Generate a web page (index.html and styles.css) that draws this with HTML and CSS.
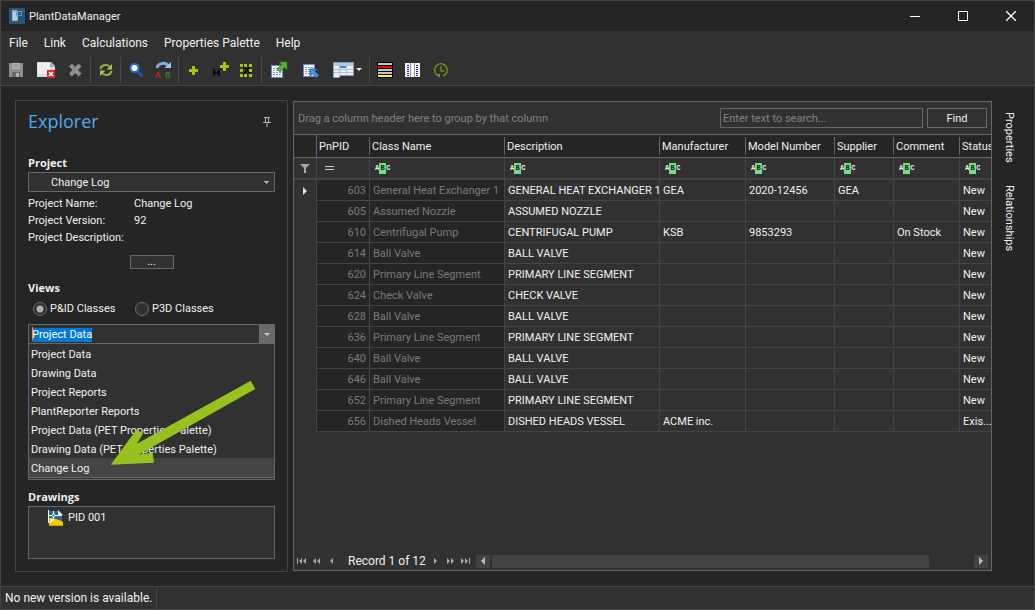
FILE: index.html
```html
<!DOCTYPE html>
<html lang="en">
<head>
<meta charset="utf-8">
<title>PlantDataManager</title>
<link rel="stylesheet" href="styles.css">
</head>
<body>
<div class="window">
  <header class="titlebar">
    <svg class="app-icon" width="16" height="16" viewBox="0 0 16 16"><rect width="16" height="16" rx="1" fill="#24587c"/><path d="M3 2h5v2h1v9H3z" fill="#8fb0c2"/><path d="M4 4h4v8H4z" fill="#b9ced9"/><path d="M7.500 8.500V3.500h5v4h-3" fill="none" stroke="#6c9ab8"/></svg>
    <h1 class="app-name">PlantDataManager</h1>
    <div class="window-controls">
      <button class="win-btn" aria-label="Minimize"><svg width="10" height="10"><path d="M0 5.500h10" stroke="#fff"/></svg></button>
      <button class="win-btn" aria-label="Maximize"><svg width="10" height="10"><path d="M.5.5h9v9h-9z" fill="none" stroke="#fff"/></svg></button>
      <button class="win-btn" aria-label="Close"><svg width="10" height="10"><path d="M0 0l10 10M10 0L0 10" stroke="#fff" stroke-width="1.300"/></svg></button>
    </div>
  </header>

  <nav class="menubar">
    <button class="menu">File</button>
    <button class="menu">Link</button>
    <button class="menu">Calculations</button>
    <button class="menu">Properties Palette</button>
    <button class="menu">Help</button>
  </nav>

  <div class="toolbar" role="toolbar" aria-label="Main">
    <div class="tool-group">
      <button class="tool" aria-label="Save"><svg width="16" height="16"><path d="M1 1h14v14H1z" fill="#8d8d8d"/><path d="M4 1h8v6H4z" fill="#b5b5b5"/><path d="M5 3h6M5 5h6" stroke="#8a8a8a"/><path d="M4 10h8v5H4z" fill="#6b6b6b"/><path d="M8 11h3v4H8z" fill="#b0b0b0"/></svg></button>
      <button class="tool tool-wide" aria-label="Remove sheet"><svg width="18" height="18"><path d="M0 1h14l4 4v11H0z" fill="#dcdcdc"/><path d="M1 2h12v11H1z" fill="#f0eef0"/><path d="M13 1v5h5z" fill="#aaa"/><path d="M10 9h8v8h-8z" fill="#d8262e"/><path d="M12 11l4 4M16 11l-4 4" stroke="#fff" stroke-width="1.500"/></svg></button>
      <button class="tool" aria-label="Delete"><svg width="16" height="16"><path d="M2.500 3l9.500 10M12 3L2.500 13" stroke="#8f8f8f" stroke-width="4"/></svg></button>
    </div>
    <div class="tool-group">
      <button class="tool" aria-label="Refresh"><svg width="16" height="16"><path d="M2.500 7C3 3.500 8 1.500 11.500 4.500M13.500 9C13 12.500 8 14.500 4.500 11.500" fill="none" stroke="#8db43b" stroke-width="2.200"/><path d="M14 2v5.500H8.500zM2 14V8.500h5.500z" fill="#a4c94f"/></svg></button>
    </div>
    <div class="tool-group">
      <button class="tool" aria-label="Search"><svg width="16" height="16"><path d="M9 9l5.500 5.500" stroke="#1757b8" stroke-width="3"/><circle cx="6.500" cy="6" r="4" fill="#fff" stroke="#2a6fe0" stroke-width="2"/></svg></button>
      <button class="tool" aria-label="Replace"><svg width="18" height="18" class="replace"><path d="M2 7C3 1.500 11 1 13 5" fill="none" stroke="#79aede" stroke-width="3"/><path d="M9.500 7H16V1z" fill="#9cc6ee"/><text x="0" y="17" fill="#c81c1c">A</text><text x="10" y="17" fill="#3a7a20">B</text></svg></button>
    </div>
    <div class="tool-group tool-group-tight">
      <button class="tool" aria-label="Add"><svg width="16" height="16"><path d="M6 4h3v3h3v3H9v3H6v-3H3V7h3z" fill="#a4c70f"/></svg></button>
      <button class="tool" aria-label="Add symbol"><svg width="18" height="18"><path d="M11 1h3v3h3v3h-3v3h-3V7H8V4h3z" fill="#a4c70f"/><path d="M1 7l7 9V7l-7 9z" fill="#0b0b0b"/></svg></button>
      <button class="tool" aria-label="Select area"><svg width="16" height="16"><path d="M3 3l8 10M11 3L3 13" stroke="#0b0b0b" stroke-width="1.500"/><path d="M0 2h3v3H0zM4 2h3v3H4zM9 2h3v3H9zM0 7h3v3H0zM9 7h3v3H9zM0 12h3v3H0zM4 12h3v3H4zM9 12h3v3H9z" fill="#a4c70f"/></svg></button>
    </div>
    <div class="tool-group">
      <button class="tool tool-wide" aria-label="Export"><svg width="18" height="18"><path d="M1.500 4.500h11v12h-11z" fill="#eef3fb" stroke="#6c8cc0"/><path d="M3 7.500h8M3 9.500h8M3 11.500h8M3 13.500h8" stroke="#7f95bb" stroke-dasharray="2 1"/><path d="M9 1h8v8l-2.500-2.500L10 11 7 8l4.500-4.500z" fill="#57b234" stroke="#2d7a17" stroke-width=".7"/></svg></button>
      <button class="tool tool-wide" aria-label="Import"><svg width="18" height="18"><path d="M1.500 3.500h11v12h-11z" fill="#eef3fb" stroke="#6c8cc0"/><path d="M3 6.500h8M3 8.500h8M3 10.500h8M3 12.500h8" stroke="#7f95bb" stroke-dasharray="2 1"/><path d="M8 8h7l-2 2.500 4 3.500-2.500 3-4-4L8 15z" fill="#4c8fdc" stroke="#1f559f" stroke-width=".7"/></svg></button>
      <button class="tool tool-menu" aria-label="Layout"><svg width="30" height="18"><path d="M.5 1.500h20v13h-14v2h-6z" fill="#e9eef4" stroke="#8ba0b8"/><path d="M1 2h19v3H1z" fill="#b9c8d8"/><path d="M1 8.500h19M1 11.500h19M6.500 2v14M13.500 5v9" stroke="#b4c2d0"/><path d="M7 5h6v2H7z" fill="#2c8fe0"/><path d="M23 7h6l-3 3z" fill="#eee"/></svg></button>
    </div>
    <div class="tool-group">
      <button class="tool" aria-label="Row colors"><svg width="16" height="16"><path d="M0 0h16v16H0z" fill="#000"/><path d="M1 2h14M1 8h14M1 11h14" stroke="#c4c4c4" stroke-width="2"/><path d="M1 5h14" stroke="#f00" stroke-width="2"/><path d="M1 14h14" stroke="#ff0" stroke-width="2"/></svg></button>
      <button class="tool" aria-label="Columns"><svg width="16" height="16"><path d="M0 1h15v14H0z" fill="#f8f8f8"/><path d="M5.500 1v14M9.500 1v14" stroke="#999"/><path d="M3 3v11M12 3v11" stroke="#1414c8" stroke-width="2" stroke-dasharray="1 1"/></svg></button>
      <button class="tool" aria-label="History"><svg width="16" height="16"><path d="M4 13A6.300 6.300 0 1 1 10 14" fill="none" stroke="#70901f" stroke-width="1.500"/><path d="M2 12h5v4z" fill="#70901f"/><path d="M8 4v5h3.500" fill="none" stroke="#70901f" stroke-width="1.300"/></svg></button>
    </div>
  </div>

  <main class="workspace">
    <aside class="explorer">
      <div class="explorer-head">
        <h2 class="explorer-title">Explorer</h2>
        <button class="pin" aria-label="Pin"><svg width="8" height="10"><path d="M1 .5h6M2.500 0v5M5.500 0v5M0 5.500h8M4 5v5" fill="none" stroke="#b5b5b5"/></svg></button>
      </div>

      <label class="section" for="project">Project</label>
      <select class="project" id="project"><option>Change Log</option></select>
      <dl class="details">
        <dt>Project Name:</dt><dd>Change Log</dd>
        <dt>Project Version:</dt><dd>92</dd>
        <dt>Project Description:</dt><dd></dd>
      </dl>
      <button class="more" aria-label="More">...</button>

      <label class="section" for="view">Views</label>
      <div class="radios">
        <label class="radio"><input type="radio" name="cls" checked>P&amp;ID Classes</label>
        <label class="radio"><input type="radio" name="cls">P3D Classes</label>
      </div>
      <div class="combo">
        <input class="combo-input" id="view" type="text" value="Project Data" autofocus>
        <button class="combo-btn" aria-label="Open list"><svg width="6" height="3"><path d="M0 0h6L3 3z" fill="#ccc"/></svg></button>
      </div>
      <ul class="options" role="listbox" aria-label="Views">
        <li class="option" role="option">Project Data</li>
        <li class="option" role="option">Drawing Data</li>
        <li class="option" role="option">Project Reports</li>
        <li class="option" role="option">PlantReporter Reports</li>
        <li class="option" role="option">Project Data (PET Properties Palette)</li>
        <li class="option" role="option">Drawing Data (PET Properties Palette)</li>
        <li class="option option-hover" role="option">Change Log</li>
      </ul>

      <h3 class="section">Drawings</h3>
      <ul class="drawings">
        <li class="drawing"><svg width="16" height="16"><path d="M1 1h9l4 4v10H1z" fill="#2c6698"/><path d="M10 0v5h5z" fill="#e6eef5"/><path d="M.5 0v13M1 5.500h13M5.500 1v8" stroke="#fff"/><circle cx="5.500" cy="5.500" r="1.500" fill="#2c6698" stroke="#fff"/><path d="M1 8q7 0 14 4v4H1z" fill="#f9c900"/><path d="M1 15.500h14" stroke="#d39a12"/><path d="M2 9h5l-5 5z" fill="#fff0a0"/></svg>PID 001</li>
      </ul>
    </aside>

    <section class="grid" aria-label="Records">
      <div class="group-panel">
        <span class="group-hint">Drag a column header here to group by that column</span>
        <input class="search" type="text" placeholder="Enter text to search..." aria-label="Search">
        <button class="find">Find</button>
      </div>
      <div class="table-wrap">
        <table class="records">
          <colgroup><col class="c-mark"><col class="c-id"><col class="c-class"><col class="c-desc"><col class="c-manu"><col class="c-model"><col class="c-supp"><col class="c-comm"><col></colgroup>
          <thead>
            <tr class="heads"><th></th><th>PnPID</th><th>Class Name</th><th>Description</th><th>Manufacturer</th><th>Model Number</th><th>Supplier</th><th>Comment</th><th>Status</th></tr>
            <tr class="filters">
              <td class="mark"><svg width="10" height="9"><path d="M0 0h10L6 4v5H4V4z" fill="#a8a8a8"/></svg></td>
              <td class="equals"><svg width="9" height="4"><path d="M0 .5h9M0 3.500h9" stroke="#ccc"/></svg></td>
              <td><span class="abc">A<b>B</b>C</span></td><td><span class="abc">A<b>B</b>C</span></td><td><span class="abc">A<b>B</b>C</span></td><td><span class="abc">A<b>B</b>C</span></td><td><span class="abc">A<b>B</b>C</span></td><td><span class="abc">A<b>B</b>C</span></td><td><span class="abc">A<b>B</b>C</span></td>
            </tr>
          </thead>
          <tbody>
            <tr><td class="mark"><svg width="4" height="8"><path d="M0 0l4 4-4 4z" fill="#ddd"/></svg></td><td>603</td><td>General Heat Exchanger 1</td><td>GENERAL HEAT EXCHANGER 1</td><td>GEA</td><td>2020-12456</td><td>GEA</td><td></td><td>New</td></tr>
            <tr><td></td><td>605</td><td>Assumed Nozzle</td><td>ASSUMED NOZZLE</td><td></td><td></td><td></td><td></td><td>New</td></tr>
            <tr><td></td><td>610</td><td>Centrifugal Pump</td><td>CENTRIFUGAL PUMP</td><td>KSB</td><td>9853293</td><td></td><td>On Stock</td><td>New</td></tr>
            <tr><td></td><td>614</td><td>Ball Valve</td><td>BALL VALVE</td><td></td><td></td><td></td><td></td><td>New</td></tr>
            <tr><td></td><td>620</td><td>Primary Line Segment</td><td>PRIMARY LINE SEGMENT</td><td></td><td></td><td></td><td></td><td>New</td></tr>
            <tr><td></td><td>624</td><td>Check Valve</td><td>CHECK VALVE</td><td></td><td></td><td></td><td></td><td>New</td></tr>
            <tr><td></td><td>628</td><td>Ball Valve</td><td>BALL VALVE</td><td></td><td></td><td></td><td></td><td>New</td></tr>
            <tr><td></td><td>636</td><td>Primary Line Segment</td><td>PRIMARY LINE SEGMENT</td><td></td><td></td><td></td><td></td><td>New</td></tr>
            <tr><td></td><td>640</td><td>Ball Valve</td><td>BALL VALVE</td><td></td><td></td><td></td><td></td><td>New</td></tr>
            <tr><td></td><td>646</td><td>Ball Valve</td><td>BALL VALVE</td><td></td><td></td><td></td><td></td><td>New</td></tr>
            <tr><td></td><td>652</td><td>Primary Line Segment</td><td>PRIMARY LINE SEGMENT</td><td></td><td></td><td></td><td></td><td>New</td></tr>
            <tr><td></td><td>656</td><td>Dished Heads Vessel</td><td>DISHED HEADS VESSEL</td><td>ACME inc.</td><td></td><td></td><td></td><td>Exis...</td></tr>
          </tbody>
        </table>
      </div>
      <div class="pager">
        <button class="page-btn" aria-label="First"><svg width="10" height="6"><path d="M.5 0v6" stroke="#aaa"/><path d="M5 0v6L2 3zM9 0v6L6 3z" fill="#aaa"/></svg></button>
        <button class="page-btn" aria-label="Previous page"><svg width="8" height="6"><path d="M3 0v6L0 3zM7 0v6L4 3z" fill="#aaa"/></svg></button>
        <button class="page-btn" aria-label="Previous"><svg width="4" height="6"><path d="M3 0v6L0 3z" fill="#aaa"/></svg></button>
        <span class="page-text">Record 1 of 12</span>
        <button class="page-btn" aria-label="Next"><svg width="4" height="6"><path d="M0 0v6l3-3z" fill="#aaa"/></svg></button>
        <button class="page-btn" aria-label="Next page"><svg width="8" height="6"><path d="M0 0v6l3-3zM4 0v6l3-3z" fill="#aaa"/></svg></button>
        <button class="page-btn" aria-label="Last"><svg width="10" height="6"><path d="M8.500 0v6" stroke="#aaa"/><path d="M0 0v6l3-3zM4 0v6l3-3z" fill="#aaa"/></svg></button>
        <div class="scroll">
          <button class="scroll-btn" aria-label="Scroll left"><svg width="4" height="8"><path d="M4 0v8L0 4z" fill="#bbb"/></svg></button>
          <div class="track"><div class="thumb"></div></div>
          <button class="scroll-btn" aria-label="Scroll right"><svg width="4" height="8"><path d="M0 0v8l4-4z" fill="#bbb"/></svg></button>
        </div>
      </div>
    </section>

    <div class="side-tabs">
      <button class="side-tab">Properties</button>
      <button class="side-tab">Relationships</button>
    </div>
  </main>

  <footer class="statusbar"><span class="status">No new version is available.</span></footer>
</div>
<svg class="pointer" width="146" height="86" viewBox="110 380 146 86" aria-hidden="true"><path d="M250.700 380.700L255.300 389 139 454.500 152.700 452.500 154 462.700 110.700 464.700 136.700 429.300 143 433.700 137 443.800z" fill="#97c11f"/></svg>
<script src="main.js"></script>
</body>
</html>
```
FILE: styles.css
```css
* { box-sizing: border-box; }
body {
  margin: 0;
  background: #252525;
  color: #f0f0f0;
  font: 11px/17px Roboto, "Open Sans", sans-serif;
}
button, input, select {
  margin: 0;
  padding: 0;
  border: 0;
  border-radius: 0;
  background: none;
  color: inherit;
  font: inherit;
}
h1, h2, h3, ul, dl, dd { margin: 0; padding: 0; }
ul { list-style: none; }
svg { display: block; flex: none; }

.window {
  min-height: 100vh;
  display: flex;
  flex-direction: column;
  border: 1px solid #444;
}
.titlebar { display: flex; align-items: center; height: 30px; padding-left: 8px; }
.app-name { margin-left: 4px; font-size: 11px; font-weight: 400; }
.window-controls { display: flex; margin-left: auto; }
.win-btn { display: grid; place-items: center; width: 48px; height: 30px; padding-left: 2px; }

.menubar { display: flex; gap: 16px; height: 24px; padding-left: 8px; background: #313131; }
.menu { white-space: nowrap; font-size: 12px; }
.toolbar {
  display: flex;
  align-items: center;
  height: 31px;
  padding-left: 1px;
  background: #313131;
  border-bottom: 1px solid #444;
}
.tool-group { display: flex; margin-right: 1px; border-right: 1px solid #484848; }
.tool-group:last-child { border: 0; }
.tool { display: grid; place-items: center; width: 28px; height: 26px; }
.tool-group-tight .tool { width: 27px; }
.tool-wide { width: 32px; }
.tool-menu { width: 42px; }
.replace { font: bold 9px "Liberation Mono", monospace; }

.workspace { flex: 1; display: flex; padding: 14px 0; }
.explorer {
  width: 273px;
  margin-left: 14px;
  padding: 9px 12px 12px;
  border: 1px solid #444;
  display: flex;
  flex-direction: column;
}
.explorer-head { display: flex; justify-content: space-between; height: 44px; padding-right: 4px; }
.explorer-title { color: #4fa9ee; font: 18px/22px "Open Sans", sans-serif; }
.pin { height: 24px; }
.section { display: block; font: bold 11px/18px "Open Sans", sans-serif; }
.project {
  appearance: none;
  height: 20px;
  padding-left: 22px;
  border: 1px solid #666;
  background-color: #313131;
  background-image: linear-gradient(to top right, transparent 50%, #aaa 50%), linear-gradient(to top left, transparent 50%, #aaa 50%);
  background-repeat: no-repeat;
  background-position: right 7px center, right 4px center;
  background-size: 3px 3px;
}
.details { display: grid; grid-template-columns: 106px 1fr; grid-auto-rows: 17px; margin-top: 3px; }
.more { align-self: center; width: 44px; height: 14px; margin: 9px 0 10px; border: 1px solid #666; background: #313131; line-height: 10px; }
.radios { display: flex; gap: 22px; padding: 3px 5px 7px; }
.radio { display: flex; align-items: center; gap: 3px; width: 80px; white-space: nowrap; }
.radio input {
  appearance: none;
  flex: none;
  width: 14px;
  height: 14px;
  border: 1px solid #707070;
  border-radius: 50%;
  background: #313131;
}
.radio input:checked { background: radial-gradient(circle, #b4b4b4 3px, #313131 4px); }
.combo { position: relative; display: flex; height: 20px; border: 1px solid #666; background: #313131; }
.combo::before { content: ""; position: absolute; left: 3px; top: 2px; width: 1px; height: 13px; background: #ff8727; }
.combo-input { flex: 1; min-width: 0; padding: 1px 0 0 3px; outline: 0; line-height: 14px; }
.combo-input::selection { background: #0078d7; color: #fff; }
.combo-btn { display: grid; place-items: center; width: 15px; background: #6a6a6a; }
.options { border: 1px solid #666; border-top: 0; border-bottom: 3px double #666; background: #313131; }
.option { height: 19px; padding-left: 2px; line-height: 21px; white-space: nowrap; }
.option-hover { background: #444; }
.options + .section { margin-top: 8px; }
.drawings { flex: 1; min-height: 53px; border: 1px solid #666; background: #313131; }
.drawing { display: flex; align-items: center; gap: 4px; height: 21px; padding-left: 19px; }

.grid {
  flex: 1;
  min-width: 0;
  display: flex;
  flex-direction: column;
  margin: 1px 0 1px 5px;
  border: 1px solid #666;
  background: #313131;
}
.group-panel { display: flex; align-items: center; gap: 4px; height: 33px; padding: 0 4px; border-bottom: 1px solid #666; }
.group-hint { flex: 1; color: #828282; white-space: nowrap; }
.search { width: 203px; height: 20px; padding-left: 2px; border: 1px solid #666; }
.search::placeholder { color: #828282; opacity: 1; }
.find { width: 60px; height: 20px; border: 1px solid #666; }
.table-wrap { flex: 1; overflow: hidden; }
.records { width: 100%; table-layout: fixed; border-collapse: separate; border-spacing: 0; }
.c-mark { width: 23px; }
.c-id { width: 53px; }
.c-class { width: 135px; }
.c-desc { width: 155px; }
.c-manu { width: 86px; }
.c-model { width: 89px; }
.c-supp { width: 59px; }
.c-comm { width: 66px; }
.records th, .records td { height: 21px; padding: 0 0 0 3px; overflow: hidden; white-space: nowrap; text-align: left; line-height: 17px; }
.records th {
  height: 23px;
  padding-left: 2px;
  border-bottom: 1px solid #666;
  background: #252525 linear-gradient(#666, #666) no-repeat right center / 1px 18px;
  font-weight: 400;
}
.records th:first-child { background-size: 1px 100%; }
.records th:last-child { background-image: none; }
.records td { border-right: 1px solid #444; border-bottom: 1px solid #444; }
.records td:last-child { border-right: 0; }
.records .filters td { height: 22px; border-bottom-width: 2px; padding-left: 5px; }
.records tbody td:first-child { border-bottom: 0; }
.records tbody td:nth-child(2), .records tbody td:nth-child(3) { background: #252525; color: #7a7a7a; }
.records tbody td:nth-child(2) { padding: 0 3px; text-align: right; }
.records .mark, .records .filters .mark { padding-left: 0; }
.mark svg { margin: 0 auto; }
.records .filters .equals { padding-left: 8px; }
.abc { display: flex; align-items: center; font: bold 7px/11px "Liberation Mono", monospace; }
.abc b { width: 7px; background: #72df83; color: #202020; text-align: center; }

.pager { display: flex; align-items: center; height: 18px; padding: 0 3px; }
.page-btn { display: grid; place-items: center; min-width: 10px; height: 13px; margin-right: 5px; }
.page-text { width: 73px; margin: 0 10px 0 6px; padding-top: 1px; font-size: 12px; white-space: nowrap; }
.scroll { flex: 1; display: flex; gap: 2px; height: 13px; }
.scroll-btn { display: grid; place-items: center; width: 14px; height: 13px; background: #434343; }
.track { flex: 1; }
.thumb { width: 91%; height: 13px; background: #434343; }

.side-tabs { display: flex; flex-direction: column; gap: 22px; width: 42px; padding: 12px 0 0 7px; }
.side-tab { width: 20px; writing-mode: vertical-rl; }
.statusbar { display: flex; height: 23px; border-top: 1px solid #444; background: #313131; }
.status { padding: 0 4px; border-right: 1px solid #444; line-height: 22px; font-size: 12px; }
.pointer { position: absolute; left: 110px; top: 380px; pointer-events: none; }
```
FILE: main.js
```js
const view = document.getElementById("view");
view.focus();
view.select();
```
